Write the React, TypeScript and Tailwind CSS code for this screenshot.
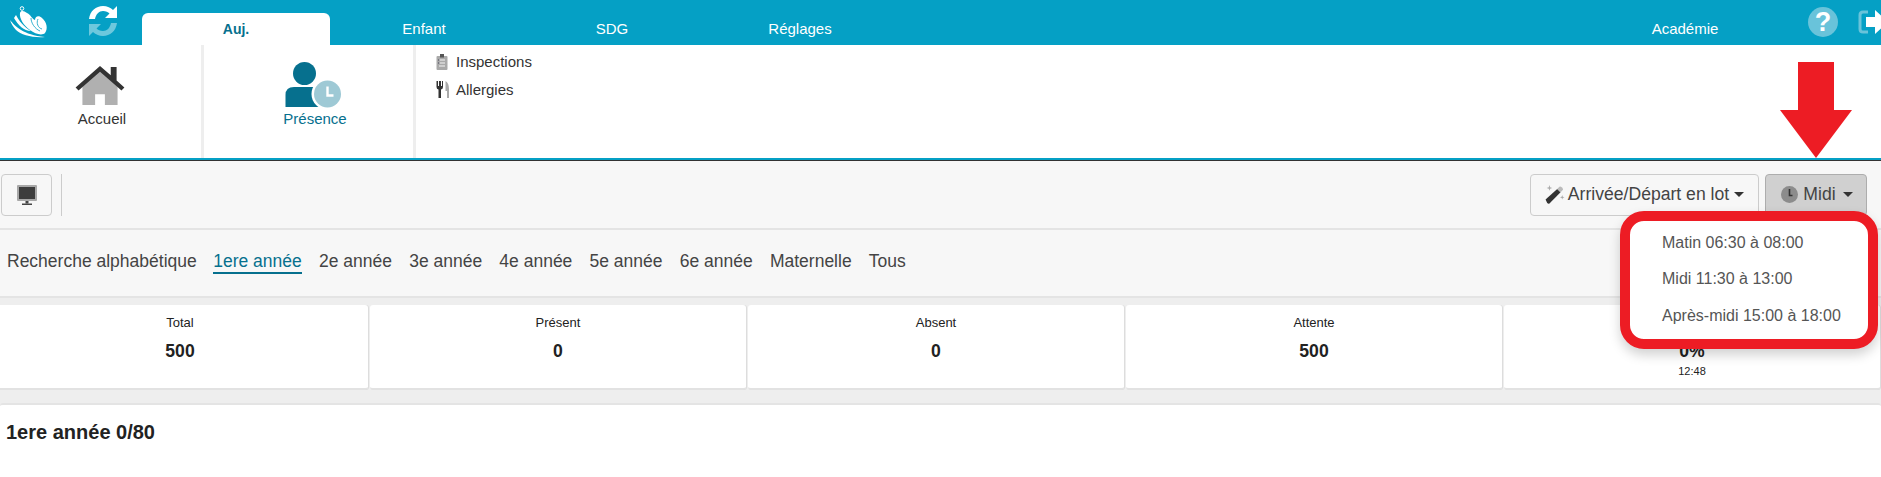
import React from "react";

const Logo = () => (
  <svg width="40" height="34" viewBox="0 0 40 34" className="block">
    <path d="M1 15 C6 21 14 30 36 32 C24 33 12 30 7 25 C4 22 2 18 1 15Z" fill="#fff" />
    <path d="M7 10 C10 16 15 22 22 26 C15 26 9 20 5 13Z" fill="#fff" />
    <path d="M11 8 C12 5 15 6 18 8 C22 10 23 14 26 15 C26 11 30 10 33 13 C38 17 39 24 36 28 C33 31 26 29 21 25 C15 21 10 13 11 8Z" fill="#fff" />
    <circle cx="13" cy="3.5" r="1.8" fill="none" stroke="#fff" strokeWidth="1" />
    <path d="M22 13 C22 18 26 24 31 26" fill="none" stroke="#05a0c5" strokeWidth="0.8" />
    <path d="M29 14 C27 18 29 23 33 24" fill="none" stroke="#05a0c5" strokeWidth="0.8" />
  </svg>
);

const Sync = () => (
  <svg width="32" height="32" viewBox="0 0 32 32" className="block">
    <path d="M2 14 C3 6 9 1 16 1 C20 1 24 3 26 5 L30 1 V13 H18 L22.5 8.5 C21 7 19 6 16 6 C12 6 9 9 8 14Z" fill="#fff" />
    <path d="M30 18 C29 26 23 31 16 31 C12 31 8 29 6 27 L2 31 V19 H14 L9.5 23.5 C11 25 13 26 16 26 C20 26 23 23 24 18Z" fill="#fff" fillOpacity="0.42" />
  </svg>
);

const Help = () => (
  <div className="w-[30px] h-[30px] rounded-full bg-[#69c3da] flex items-center justify-center text-white font-bold text-[27px] leading-none">?</div>
);

const SignOut = () => (
  <svg width="30" height="30" viewBox="0 0 30 30" className="block shrink-0">
    <path d="M10 5 H5 Q2 5 2 8 V22 Q2 25 5 25 H10" fill="none" stroke="#69c3da" strokeWidth="3" />
    <path d="M8 10 H17 V3 L30 15 L17 27 V20 H8Z" fill="#fff" />
  </svg>
);

const Home = () => (
  <svg width="52" height="41" viewBox="0 0 52 42" className="block ml-[-4px]">
    <path d="M8 22 L26 6 L44 22 V41 H31 V30 H21 V41 H8Z" fill="#b0b0b0" />
    <path d="M1 23 L26 1 L37 10.5 V2 H43 V16 L51 23 L48 26 L26 7 L4 26Z" fill="#333" />
  </svg>
);

const PersonClock = () => (
  <svg width="57" height="46" viewBox="0 0 57 46" className="block ml-[-4px]">
    <ellipse cx="19.5" cy="11.5" rx="11.5" ry="11.5" fill="#06708e" />
    <path d="M0.5 45 V33 Q0.5 25 9 25 H32 Q40 25 40 33 V45Z" fill="#06708e" />
    <circle cx="42" cy="32" r="15.5" fill="#fff" />
    <circle cx="42.5" cy="32" r="13.5" fill="#9ec9d5" />
    <path d="M42.5 24.5 V33.5 H48.5" fill="none" stroke="#fff" strokeWidth="2.4" />
  </svg>
);

const Clipboard = () => (
  <svg width="12" height="16" viewBox="0 0 12 16" className="block">
    <rect x="0.5" y="2" width="11" height="14" rx="1" fill="#a9a9a9" />
    <rect x="4" y="0" width="4" height="3.5" fill="#555" />
    <path d="M3 6 H9 M3 9 H9 M3 12 H9" stroke="#f4f4f4" strokeWidth="1" />
    <path d="M2 6 H3.5 M2 9 H3.5" stroke="#445" strokeWidth="1" />
  </svg>
);

const Cutlery = () => (
  <svg width="13" height="17" viewBox="0 0 13 17" className="block">
    <path d="M0.5 0 V6 Q0.5 8 2.5 8.5 V17 H5 V8.5 Q7 8 7 6 V0 H6 V5 H5 V0 H3 V5 H2 V0Z" fill="#333" />
    <path d="M9.5 0 Q13 2 13 8 V17 H11 V10 H9.5Z" fill="#aaa" />
  </svg>
);

const Monitor = () => (
  <svg width="20" height="21" viewBox="0 0 20 21" className="block">
    <rect x="0" y="0" width="20" height="16" rx="1" fill="#a8a8a8" />
    <rect x="2" y="2" width="16" height="12" fill="#3d3d3d" />
    <rect x="8.5" y="16" width="3" height="2.5" fill="#444" />
    <rect x="5" y="18.5" width="10" height="1.5" fill="#444" />
  </svg>
);

const Wand = () => (
  <svg width="20" height="20" viewBox="0 0 18 18" className="block">
    <path d="M0.5 14 L11 4.5 L14 7.5 L4 17.5 Q3 18 2 17Z" fill="#333" />
    <path d="M11 4.5 L13 2.5 Q14 2 15 3 L16 4 Q16.5 5 16 5.5 L14 7.5Z" fill="#bbb" />
    <path d="M4 1 L4.6 3 L6.5 3.6 L4.6 4.2 L4 6 L3.4 4.2 L1.5 3.6 L3.4 3Z" fill="#aaa" />
    <path d="M15.5 10 L16 11.5 L17.5 12 L16 12.5 L15.5 14 L15 12.5 L13.5 12 L15 11.5Z" fill="#aaa" />
  </svg>
);

const ClockIcon = () => (
  <svg width="17" height="17" viewBox="0 0 17 17" className="block">
    <circle cx="8.5" cy="8.5" r="8.5" fill="#8c8c8c" />
    <path d="M8.5 3 V9.5 H11.5" fill="none" stroke="#333" strokeWidth="1.6" />
  </svg>
);

const Caret = () => <span className="inline-block w-0 h-0 ml-[2px] border-x-[5px] border-x-transparent border-t-[5px] border-t-[#333]" />;

const Stat = ({ label, value, extra }: { label?: string; value: string; extra?: string }) => (
  <div className="flex-1 h-[85px] bg-white rounded-[3px] border-b-2 border-[#e2e2e2] shadow-[1px_0_0_#dddddd] pt-[11px] flex flex-col items-center text-[#222]">
    <div className="text-[13px] leading-[14px] h-[14px]">{label}</div>
    <div className="text-[17.6px] font-bold leading-[18px] mt-[12px]">{value}</div>
    {extra && <div className="text-[11px] leading-[13px] mt-[5px]">{extra}</div>}
  </div>
);

const grades = ["2e année", "3e année", "4e année", "5e année", "6e année", "Maternelle", "Tous"];

export default function App() {
  return (
    <div className="relative w-[1881px] h-[477px] overflow-hidden bg-[#eeeeee] text-[#333]" style={{ fontFamily: '"Liberation Sans", Arial, sans-serif' }}>
      {/* top bar */}
      <div className="h-[45px] bg-[#05a0c5] flex items-end text-white text-[15px]">
        <div className="w-[142px] h-[45px] flex items-center shrink-0">
          <div className="ml-[9px] mt-[-2px]"><Logo /></div>
          <div className="ml-[38px] mt-[-4px]"><Sync /></div>
        </div>
        <div className="w-[188px] h-[32px] shrink-0 bg-white rounded-t-[6px] flex items-center justify-center font-bold text-[#06708e] text-[14px]">Auj.</div>
        <div className="w-[188px] h-[32px] shrink-0 flex items-center justify-center">Enfant</div>
        <div className="w-[188px] h-[32px] shrink-0 flex items-center justify-center">SDG</div>
        <div className="w-[188px] h-[32px] shrink-0 flex items-center justify-center">Réglages</div>
        <div className="ml-[697px] w-[188px] h-[32px] shrink-0 flex items-center justify-center">Académie</div>
        <div className="self-start mt-[7px] ml-[29px] shrink-0"><Help /></div>
        <div className="self-start mt-[7px] ml-[20px] shrink-0"><SignOut /></div>
      </div>

      {/* ribbon */}
      <div className="h-[115px] bg-white flex border-b-2 border-b-[#05a0c5] relative">
        <div className="w-[204px] h-[113px] border-r-[3px] border-[#eeeeee] flex flex-col items-center pt-[20px] pl-[3px]">
          <Home />
          <div className="text-[15px] leading-[16px] mt-[5px] text-[#333]">Accueil</div>
        </div>
        <div className="w-[212px] h-[113px] border-r-[3px] border-[#eeeeee] flex flex-col items-center pt-[17px] pl-[13px]">
          <PersonClock />
          <div className="text-[15px] leading-[16px] mt-[3px] text-[#06708e]">Présence</div>
        </div>
        <div className="pl-[20px] pt-[8px] text-[15px] leading-[17px]">
          <div className="flex items-center gap-[8px]"><Clipboard /><span>Inspections</span></div>
          <div className="flex items-center gap-[7px] mt-[11px]"><Cutlery /><span>Allergies</span></div>
        </div>
      </div>

      {/* toolbar */}
      <div className="h-[70px] bg-[#f7f7f7] border-t border-t-[#333] border-b-2 border-b-[#e4e4e4] flex items-start pt-[13px] pl-[1px] pr-[14px]">
        <div className="w-[51px] h-[42px] border border-[#ccc] rounded-[4px] flex items-center justify-center"><Monitor /></div>
        <div className="w-px h-[42px] bg-[#ccc] ml-[9px]" />
        <div className="ml-auto h-[42px] w-[229px] border border-[#ccc] rounded-[4px] flex items-center justify-center text-[17.6px] gap-[3px] text-[#444] pb-[2px]">
          <Wand />
          <span>Arrivée/Départ en lot</span>
          <Caret />
        </div>
        <div className="ml-[6px] h-[42px] w-[102px] border border-[#adadad] rounded-[4px] bg-[#d0d0d0] flex items-center justify-center text-[17.6px] gap-[5px] text-[#444] pb-[2px] pl-[2px]">
          <ClockIcon />
          <span>Midi</span>
          <Caret />
        </div>
      </div>

      {/* filter row */}
      <div className="h-[68px] bg-[#f7f7f7] border-b-2 border-[#e4e4e4] flex items-start pt-[21px] pl-[7px] text-[17.5px] leading-[20px] text-[#444]">
        <span>Recherche alphabétique</span>
        <span className="ml-[16.5px] text-[#06708e] border-b-2 border-[#06708e] h-[23px]">1ere année</span>
        {grades.map((g) => (
          <span key={g} className="ml-[17.2px]">{g}</span>
        ))}
      </div>

      {/* stats */}
      <div className="flex gap-[2px] mt-[7px] ml-[-8px] mr-[1px]">
        <Stat label="Total" value="500" />
        <Stat label="Présent" value="0" />
        <Stat label="Absent" value="0" />
        <Stat label="Attente" value="500" />
        <Stat value="0%" extra="12:48" />
      </div>

      {/* panel */}
      <div className="mt-[13px] h-[80px] bg-white border-t-2 border-[#e4e4e4] pl-[6px] pt-[16px] rounded-t-[3px]">
        <div className="text-[20px] font-bold leading-[22px] text-[#222]">1ere année 0/80</div>
      </div>

      {/* annotation arrow */}
      <svg width="72" height="96" viewBox="0 0 72 96" className="absolute left-[1780px] top-[62px]">
        <path d="M18 0 H54 V48 H72 L36 96 L0 48 H18Z" fill="#ed1c24" />
      </svg>

      {/* dropdown with annotation frame */}
      <div className="absolute left-[1620px] top-[211px] w-[258px] h-[138px] rounded-[24px] border-[10px] border-[#ed1c24] bg-white shadow-[0_6px_12px_rgba(0,0,0,0.18)] pl-[32px] text-[16px] leading-[20px] text-[#555]">
        <div className="mt-[12px]">Matin 06:30 à 08:00</div>
        <div className="mt-[16px]">Midi 11:30 à 13:00</div>
        <div className="mt-[17px]">Après-midi 15:00 à 18:00</div>
      </div>
    </div>
  );
}
